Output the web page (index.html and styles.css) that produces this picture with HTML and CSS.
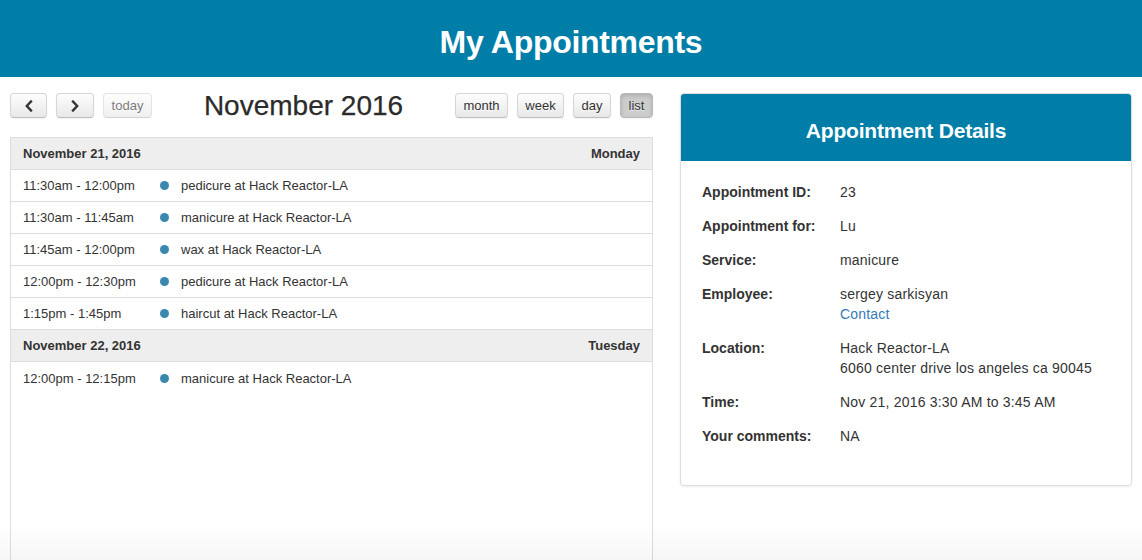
FILE: index.html
```html
<!DOCTYPE html>
<html lang="en">
<head>
<meta charset="utf-8">
<title>My Appointments</title>
<link rel="stylesheet" href="styles.css">
</head>
<body>
<header class="topbar">
  <h1 class="topbar-title">My Appointments</h1>
</header>
<main class="page">
  <section class="calendar">
    <div class="toolbar">
      <div class="btn-group">
        <button class="btn btn-prev" aria-label="prev">
          <svg width="10" height="12" viewBox="0 0 10 12"><path d="M7 1.5 L2.8 6 L7 10.5" fill="none" stroke="#333" stroke-width="2.4" stroke-linecap="square"/></svg>
        </button>
        <button class="btn btn-next" aria-label="next">
          <svg width="10" height="12" viewBox="0 0 10 12"><path d="M3 1.5 L7.2 6 L3 10.5" fill="none" stroke="#333" stroke-width="2.4" stroke-linecap="square"/></svg>
        </button>
        <button class="btn btn-today is-disabled">today</button>
      </div>
      <h2 class="toolbar-title">November 2016</h2>
      <div class="btn-group">
        <button class="btn btn-month">month</button>
        <button class="btn btn-week">week</button>
        <button class="btn btn-day">day</button>
        <button class="btn btn-list is-active">list</button>
      </div>
    </div>
    <div class="list">
      <div class="day-head"><span>November 21, 2016</span><span>Monday</span></div>
      <div class="item"><span class="item-time">11:30am - 12:00pm</span><span class="item-dot"></span><span class="item-title">pedicure at Hack Reactor-LA</span></div>
      <div class="item"><span class="item-time">11:30am - 11:45am</span><span class="item-dot"></span><span class="item-title">manicure at Hack Reactor-LA</span></div>
      <div class="item"><span class="item-time">11:45am - 12:00pm</span><span class="item-dot"></span><span class="item-title">wax at Hack Reactor-LA</span></div>
      <div class="item"><span class="item-time">12:00pm - 12:30pm</span><span class="item-dot"></span><span class="item-title">pedicure at Hack Reactor-LA</span></div>
      <div class="item"><span class="item-time">1:15pm - 1:45pm</span><span class="item-dot"></span><span class="item-title">haircut at Hack Reactor-LA</span></div>
      <div class="day-head"><span>November 22, 2016</span><span>Tuesday</span></div>
      <div class="item item-last"><span class="item-time">12:00pm - 12:15pm</span><span class="item-dot"></span><span class="item-title">manicure at Hack Reactor-LA</span></div>
    </div>
  </section>
  <aside class="panel">
    <div class="panel-head"><h3 class="panel-title">Appointment Details</h3></div>
    <div class="panel-body">
      <div class="detail"><div class="detail-label">Appointment ID:</div><div class="detail-value">23</div></div>
      <div class="detail"><div class="detail-label">Appointment for:</div><div class="detail-value">Lu</div></div>
      <div class="detail"><div class="detail-label">Service:</div><div class="detail-value">manicure</div></div>
      <div class="detail"><div class="detail-label">Employee:</div><div class="detail-value">sergey sarkisyan<br><a class="link" href="#">Contact</a></div></div>
      <div class="detail"><div class="detail-label">Location:</div><div class="detail-value">Hack Reactor-LA<br>6060 center drive los angeles ca 90045</div></div>
      <div class="detail"><div class="detail-label">Time:</div><div class="detail-value">Nov 21, 2016 3:30 AM to 3:45 AM</div></div>
      <div class="detail"><div class="detail-label">Your comments:</div><div class="detail-value">NA</div></div>
    </div>
  </aside>
</main>
<div class="bottom-fade"></div>
</body>
</html>
```
FILE: styles.css
```css
* { box-sizing: border-box; }
html, body { margin: 0; padding: 0; }
body {
  font-family: "Liberation Sans", Arial, Helvetica, sans-serif;
  color: #333;
  background: #fff;
  font-size: 14px;
  overflow: hidden;
  height: 560px;
}
.topbar {
  height: 77px;
  background: #007ea7;
  display: flex;
  align-items: center;
  justify-content: center;
}
.topbar-title {
  margin: 0;
  color: #fff;
  font-size: 32px;
  font-weight: bold;
  line-height: 36px;
  padding-top: 7px;
  letter-spacing: -0.3px;
}
.page {
  display: flex;
  gap: 27px;
  padding: 16px 10px 0 10px;
}
.calendar { width: 643px; flex: none; }
.toolbar {
  display: flex;
  align-items: center;
  justify-content: space-between;
  height: 25px;
  margin-bottom: 19px;
}
.btn-group { display: flex; gap: 9px; }
.btn {
  height: 25px;
  padding: 0;
  font-family: inherit;
  font-size: 13px;
  color: #333;
  border: 1px solid #d6d6d6;
  border-bottom-color: #bdbdbd;
  border-radius: 4px;
  background: linear-gradient(#fdfdfd, #e8e8e8);
  box-shadow: inset 0 1px 0 rgba(255,255,255,.2), 0 1px 2px rgba(0,0,0,.05);
  text-shadow: 0 1px 1px rgba(255,255,255,.75);
  display: flex;
  align-items: center;
  justify-content: center;
}
.btn-prev { width: 37px; }
.btn-next { width: 38px; }
.btn-today { width: 49px; }
.btn-month { width: 53px; }
.btn-week { width: 47px; }
.btn-day { width: 38px; }
.btn-list { width: 33px; }
.is-disabled { opacity: .65; box-shadow: none; }
.is-active {
  background: #cdcdcd;
  border-color: #b8b8b8;
  box-shadow: inset 0 2px 4px rgba(0,0,0,.15), 0 1px 2px rgba(0,0,0,.05);
}
.toolbar-title {
  margin: 0;
  font-size: 28px;
  font-weight: normal;
  line-height: 30px;
  letter-spacing: 0;
  padding-top: 1px;
  color: #2b2b2b;
  -webkit-text-stroke: 0.25px #2b2b2b;
}
.list {
  border: 1px solid #ddd;
  height: 440px;
  font-size: 13px;
}
.day-head {
  height: 32px;
  background: #eee;
  border-bottom: 1px solid #ddd;
  display: flex;
  align-items: center;
  justify-content: space-between;
  padding: 0 12px;
  font-weight: bold;
}
.item {
  height: 32px;
  border-bottom: 1px solid #ddd;
  display: flex;
  align-items: center;
  padding-left: 12px;
}
.item-last { border-bottom: none; }
.item-time { width: 137px; flex: none; }
.item-dot {
  width: 9px;
  height: 9px;
  border-radius: 50%;
  background: #3a87ad;
  margin-right: 12px;
  flex: none;
}
.panel {
  width: 452px;
  flex: none;
  align-self: flex-start;
  border: 1px solid #ddd;
  border-radius: 4px;
  box-shadow: 0 1px 2px rgba(0,0,0,.08);
  overflow: hidden;
}
.panel-head {
  background: #007ea7;
  height: 67px;
  padding-top: 25px;
  text-align: center;
}
.panel-title {
  margin: 0;
  color: #fff;
  font-size: 21px;
  line-height: 24px;
  font-weight: bold;
  letter-spacing: -0.2px;
}
.panel-body { padding: 21px 20px 25px 21px; }
.detail {
  display: grid;
  grid-template-columns: 138px 1fr;
  line-height: 20px;
  margin-bottom: 14px;
}
.detail-label { font-weight: bold; }
.detail-value { letter-spacing: 0.2px; }
.link { color: #337ab7; text-decoration: none; }
.bottom-fade {
  position: fixed;
  left: 0;
  right: 0;
  bottom: 0;
  height: 36px;
  background: linear-gradient(rgba(0,0,0,0), rgba(0,0,0,.035));
  pointer-events: none;
}
```
